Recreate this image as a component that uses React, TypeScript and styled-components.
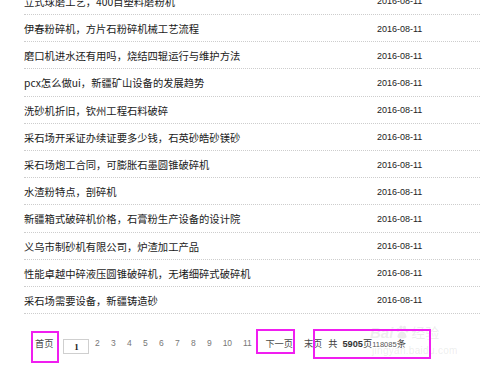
import React from "react";
import styled, { createGlobalStyle } from "styled-components";

const Global = createGlobalStyle`
  html, body { margin: 0; padding: 0; background: #ffffff; }
  body { width: 480px; height: 371px; overflow: hidden; }
`;

const Page = styled.div`
  position: relative;
  width: 480px;
  height: 371px;
  overflow: hidden;
  background: #fff;
  font-family: "Noto Sans CJK SC", "Liberation Sans", sans-serif;
`;

const List = styled.ul`
  list-style: none;
  margin: -12.2px 0 0 24px;
  padding: 0;
  width: 470px;
`;

const Row = styled.li`
  box-sizing: border-box;
  height: 27.2px;
  padding-top: 1px;
  border-bottom: 1px dotted #cdcdcd;
  display: grid;
  grid-template-columns: 353px auto;
  align-items: center;
`;

const Title = styled.span`
  font-size: 10.3px;
  color: #1a1a1a;
  white-space: nowrap;
`;

const DateText = styled.span`
  font-family: "Liberation Sans", sans-serif;
  font-size: 9px;
  color: #222;
`;

const Pager = styled.div`
  display: flex;
  align-items: center;
  height: 20px;
  margin-top: 19px;
  padding-left: 35px;
  font-size: 9.2px;
  color: #555;
  white-space: nowrap;
`;

const PagerLink = styled.span<{ $ml: number }>`
  margin-left: ${(p) => p.$ml}px;
  color: #4a4a4a;
`;

const CurrentBox = styled.span`
  box-sizing: border-box;
  margin-left: 10px;
  margin-top: 7px;
  width: 26px;
  height: 15px;
  border: 1px solid #cfcfcf;
  display: flex;
  align-items: center;
  justify-content: center;
  font-family: "Liberation Serif", serif;
  font-weight: bold;
  font-size: 9px;
  color: #222;
`;

const Num = styled.span<{ $wide?: boolean }>`
  width: ${(p) => (p.$wide ? 20 : 16)}px;
  text-align: center;
  font-family: "Liberation Sans", sans-serif;
  font-size: 8.5px;
  color: #777;
`;

const Total = styled.span`
  margin-left: 6px;
  color: #3a3a3a;
`;

const Bold = styled.b`
  font-family: "Liberation Sans", sans-serif;
  font-weight: bold;
  color: #333;
  margin-left: 5px;
`;

const Small = styled.span`
  font-family: "Liberation Sans", sans-serif;
  font-size: 7.5px;
  color: #555;
`;

const Mark = styled.div<{ $l: number; $t: number; $w: number; $h: number }>`
  position: absolute;
  box-sizing: border-box;
  left: ${(p) => p.$l}px;
  top: ${(p) => p.$t}px;
  width: ${(p) => p.$w}px;
  height: ${(p) => p.$h}px;
  border: 2px solid #f01ef0;
  pointer-events: none;
`;

const Watermark = styled.div`
  position: absolute;
  left: 370px;
  top: 322px;
  width: 100px;
  color: rgba(120, 120, 120, 0.14);
  font-family: "Liberation Sans", sans-serif;
  pointer-events: none;
`;

const WmTop = styled.div`
  display: flex;
  align-items: center;
  gap: 2px;
  font-size: 15px;
  font-weight: bold;
  font-style: italic;
`;

const WmCn = styled.span`
  font-family: "Noto Sans CJK SC", sans-serif;
  font-style: normal;
  font-size: 14px;
  font-weight: normal;
`;

const WmUrl = styled.div`
  font-size: 10px;
  margin-top: 3px;
  margin-left: 2px;
  letter-spacing: 0.3px;
`;

const rows = [
  "立式球磨工艺，400目塑料磨粉机",
  "伊春粉碎机，方片石粉碎机械工艺流程",
  "磨口机进水还有用吗，烧结四辊运行与维护方法",
  "pcx怎么做ui，新疆矿山设备的发展趋势",
  "洗砂机折旧，钦州工程石料破碎",
  "采石场开采证办续证要多少钱，石英砂皓砂镁砂",
  "采石场炮工合同，可膨胀石墨圆锥破碎机",
  "水渣粉特点，剖碎机",
  "新疆箱式破碎机价格，石膏粉生产设备的设计院",
  "义乌市制砂机有限公司，炉渣加工产品",
  "性能卓越中碎液压圆锥破碎机，无堵细碎式破碎机",
  "采石场需要设备，新疆铸造砂",
];

const nums = [2, 3, 4, 5, 6, 7, 8, 9, 10, 11];

export default function App() {
  return (
    <Page>
      <Global />
      <List>
        {rows.map((t) => (
          <Row key={t}>
            <Title>{t}</Title>
            <DateText>2016-08-11</DateText>
          </Row>
        ))}
      </List>
      <Pager>
        <PagerLink $ml={0}>首页</PagerLink>
        <CurrentBox>1</CurrentBox>
        {nums.map((n) => (
          <Num key={n} $wide={n >= 10}>
            {n}
          </Num>
        ))}
        <PagerLink $ml={8}>下一页</PagerLink>
        <PagerLink $ml={11}>末页</PagerLink>
        <Total>
          共<Bold>5905</Bold>页<Small>118085</Small>条
        </Total>
      </Pager>
      <Watermark>
        <WmTop>
          Bai
          <svg width="14" height="14" viewBox="0 0 14 14">
            <g fill="currentColor">
              <ellipse cx="3" cy="5" rx="1.6" ry="2" />
              <ellipse cx="6" cy="2.5" rx="1.6" ry="2" />
              <ellipse cx="9.5" cy="2.8" rx="1.6" ry="2" />
              <ellipse cx="12" cy="5.6" rx="1.5" ry="1.9" />
              <path d="M7 6.5c-2.5 0-4.5 3-4.5 5 0 1.5 1.5 2 4.5 2s4.5-.5 4.5-2c0-2-2-5-4.5-5z" />
            </g>
          </svg>
          <WmCn>经验</WmCn>
        </WmTop>
        <WmUrl>jingyan.baidu.com</WmUrl>
      </Watermark>
      <Mark $l={31} $t={331} $w={28} $h={32} />
      <Mark $l={256} $t={329} $w={39} $h={25} />
      <Mark $l={313} $t={329} $w={118} $h={30} />
    </Page>
  );
}
